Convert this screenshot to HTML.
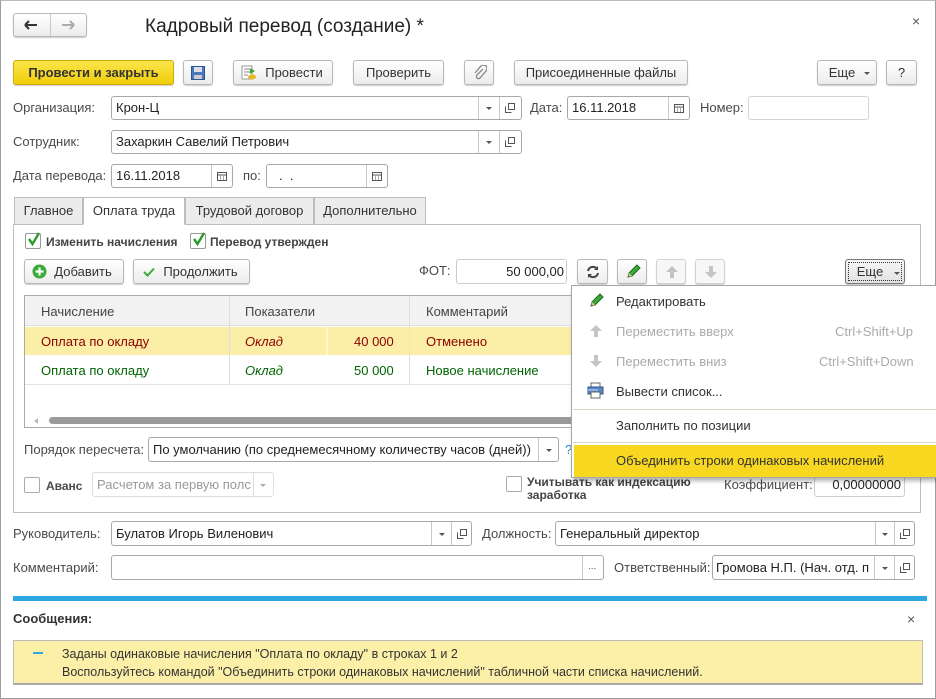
<!DOCTYPE html>
<html><head><meta charset="utf-8"><style>
*{margin:0;padding:0;box-sizing:border-box}
body{width:936px;height:699px;background:#fff;font-family:"Liberation Sans",Arial,sans-serif;font-size:13px;color:#333;position:relative;overflow:hidden}
.a{position:absolute;white-space:nowrap}
.btn{position:absolute;border:1px solid #b8b8b8;border-radius:3px;background:linear-gradient(#fff,#ececec);box-shadow:0 1px 1px rgba(0,0,0,.2);text-align:center;color:#333;line-height:23px}
.inp{position:absolute;border:1px solid #a8a8a8;border-radius:3px;background:#fff;line-height:22px;padding-left:4px;color:#222}
.sep{position:absolute;top:0;bottom:0;border-left:1px solid #c8c8c8}
.lbl{position:absolute;color:#4a4a4a;line-height:16px}
.cb{position:absolute;width:16px;height:16px;border:1px solid #999;border-radius:2px;background:#fff}
.dd{position:absolute;top:8px;width:0;height:0;border-left:3px solid transparent;border-right:3px solid transparent;border-top:3px solid #555}
.tab{position:absolute;top:197px;height:28px;border:1px solid #bdbdbd;background:#ececec;line-height:26px;text-align:center;color:#333}
</style></head><body>
<div class="a" style="left:0;top:0;width:936px;height:699px;border:1px solid #9c9c9c;border-top:1px solid #bbb"></div>

<div class="btn" style="left:13px;top:13px;width:74px;height:24px"><div class="sep" style="left:36px"></div>
<svg class="a" style="left:10px;top:6px" width="14" height="10"><path d="M1 5H13M1 5L5 1M1 5L5 9" stroke="#333" stroke-width="2" fill="none"/></svg>
<svg class="a" style="left:47px;top:6px" width="14" height="10"><path d="M1 5H13M13 5L9 1M13 5L9 9" stroke="#aaa" stroke-width="2" fill="none"/></svg></div>
<div class="a" style="left:145px;top:14px;font-size:19px;color:#222;line-height:26px">Кадровый перевод (создание) *</div>
<div class="a" style="left:912px;top:13px;color:#555;font-size:14px">×</div>

<div class="btn" style="left:13px;top:60px;width:161px;height:25px;background:linear-gradient(#fbe54a,#f0cd0a);border-color:#d2ae0c;font-weight:bold;color:#333">Провести и закрыть</div>
<div class="btn" style="left:183px;top:60px;width:30px;height:25px"><svg class="a" style="left:7px;top:5px" width="14" height="14"><rect x="0.5" y="0.5" width="13" height="13" fill="#4a78b8" stroke="#2c5592"/><rect x="3" y="1" width="8" height="5" fill="#dde"/><rect x="3" y="9" width="8" height="4" fill="#ccc"/></svg></div>
<div class="btn" style="left:233px;top:60px;width:100px;height:25px;padding-left:22px">Провести<svg class="a" style="left:7px;top:4px" width="16" height="16"><rect x="1" y="1" width="10" height="13" fill="#fff" stroke="#999"/><path d="M3 4h6M3 7h6M3 10h4" stroke="#888"/><path d="M9 3l5 3-5 3z" fill="#3aa63a"/><ellipse cx="11" cy="12" rx="4" ry="2.5" fill="#e9b824"/></svg></div>
<div class="btn" style="left:353px;top:60px;width:91px;height:25px">Проверить</div>
<div class="btn" style="left:464px;top:60px;width:30px;height:25px"><svg class="a" style="left:8px;top:4px" width="14" height="16"><path d="M10 4L4 10a2 2 0 0 0 3 3l6-7a3.5 3.5 0 0 0-5-5L2 8" stroke="#888" stroke-width="1.3" fill="none"/></svg></div>
<div class="btn" style="left:514px;top:60px;width:174px;height:25px">Присоединенные файлы</div>
<div class="btn" style="left:817px;top:60px;width:60px;height:25px;padding-right:10px">Еще<div class="dd" style="left:46px;top:11px"></div></div>
<div class="btn" style="left:886px;top:60px;width:31px;height:25px">?</div>

<div class="lbl" style="left:13px;top:100px">Организация:</div>
<div class="inp" style="left:111px;top:96px;width:411px;height:24px">Крон-Ц<div class="sep" style="left:366px"></div><div class="dd" style="left:374px;top:10px"></div><div class="sep" style="left:387px"></div><svg class="a" style="left:393px;top:6px" width="10" height="10"><rect x="3.5" y="0.5" width="6" height="6" fill="none" stroke="#555"/><path d="M0.5 3.5v6h6" fill="none" stroke="#555"/></svg></div>
<div class="lbl" style="left:530px;top:100px">Дата:</div>
<div class="inp" style="left:567px;top:96px;width:123px;height:24px">16.11.2018<div class="sep" style="left:100px"></div><svg class="a" style="left:106px;top:6px" width="10" height="10"><rect x="0.5" y="1.5" width="9" height="8" fill="none" stroke="#555"/><path d="M1 4h8M3 6h1M6 6h1M3 8h1M6 8h1" stroke="#555"/></svg></div>
<div class="lbl" style="left:700px;top:100px">Номер:</div>
<div class="inp" style="left:748px;top:96px;width:121px;height:24px;border-color:#d4d4d4"></div>

<div class="lbl" style="left:13px;top:134px">Сотрудник:</div>
<div class="inp" style="left:111px;top:130px;width:411px;height:24px">Захаркин Савелий Петрович<div class="sep" style="left:366px"></div><div class="dd" style="left:374px;top:10px"></div><div class="sep" style="left:387px"></div><svg class="a" style="left:393px;top:6px" width="10" height="10"><rect x="3.5" y="0.5" width="6" height="6" fill="none" stroke="#555"/><path d="M0.5 3.5v6h6" fill="none" stroke="#555"/></svg></div>

<div class="lbl" style="left:13px;top:168px">Дата перевода:</div>
<div class="inp" style="left:111px;top:164px;width:122px;height:24px">16.11.2018<div class="sep" style="left:99px"></div><svg class="a" style="left:105px;top:6px" width="10" height="10"><rect x="0.5" y="1.5" width="9" height="8" fill="none" stroke="#555"/><path d="M1 4h8M3 6h1M6 6h1M3 8h1M6 8h1" stroke="#555"/></svg></div>
<div class="lbl" style="left:243px;top:168px">по:</div>
<div class="inp" style="left:266px;top:164px;width:122px;height:24px;padding-left:12px">.&nbsp;&nbsp;.<div class="sep" style="left:99px"></div><svg class="a" style="left:105px;top:6px" width="10" height="10"><rect x="0.5" y="1.5" width="9" height="8" fill="none" stroke="#555"/><path d="M1 4h8M3 6h1M6 6h1M3 8h1M6 8h1" stroke="#555"/></svg></div>

<div class="a" style="left:13px;top:224px;width:908px;height:289px;border:1px solid #bdbdbd"></div>
<div class="tab" style="left:14px;width:69px">Главное</div>
<div class="tab" style="left:83px;width:102px;background:#fff;border-bottom-color:#fff;height:28px">Оплата труда</div>
<div class="tab" style="left:185px;width:129px">Трудовой договор</div>
<div class="tab" style="left:314px;width:112px">Дополнительно</div>

<div class="cb" style="left:25px;top:233px"></div><svg class="a" style="left:27px;top:231px" width="14" height="16"><path d="M2 8l3.5 5L12 2" stroke="#2d9a2d" stroke-width="2.4" fill="none"/></svg>
<div class="lbl" style="left:46px;top:234px;font-weight:bold;color:#444;font-size:12px">Изменить начисления</div>
<div class="cb" style="left:190px;top:233px"></div><svg class="a" style="left:192px;top:231px" width="14" height="16"><path d="M2 8l3.5 5L12 2" stroke="#2d9a2d" stroke-width="2.4" fill="none"/></svg>
<div class="lbl" style="left:210px;top:234px;font-weight:bold;color:#444;font-size:12px">Перевод утвержден</div>

<div class="btn" style="left:24px;top:259px;width:100px;height:25px;padding-left:18px">Добавить<svg class="a" style="left:7px;top:4px" width="15" height="15"><circle cx="7.5" cy="7.5" r="7" fill="#3aaa3a"/><path d="M7.5 3.5v8M3.5 7.5h8" stroke="#fff" stroke-width="2.2"/></svg></div>
<div class="btn" style="left:133px;top:259px;width:117px;height:25px;padding-left:18px">Продолжить<svg class="a" style="left:9px;top:7px" width="12" height="10"><path d="M1 5l3.5 3.5L11 1.5" stroke="#3aaa3a" stroke-width="2" fill="none"/></svg></div>
<div class="lbl" style="left:419px;top:263px">ФОТ:</div>
<div class="inp" style="left:456px;top:259px;width:111px;height:25px;text-align:right;padding-right:2px;border-color:#ccc;line-height:23px">50 000,00</div>
<div class="btn" style="left:577px;top:259px;width:31px;height:25px"><svg class="a" style="left:8px;top:5px" width="14" height="14"><path d="M2 6a5 5 0 0 1 9-2M12 8a5 5 0 0 1-9 2" stroke="#444" stroke-width="2" fill="none"/><path d="M12 1v4H8z M2 13V9h4z" fill="#444"/></svg></div>
<div class="btn" style="left:617px;top:259px;width:30px;height:25px"><svg class="a" style="left:7px;top:4px" width="16" height="16"><path d="M3 13l1-4 8-8 3 3-8 8z" fill="#3aaa3a" stroke="#1d6b1d"/><path d="M3 13l1-4 3 3z" fill="#e9c48a"/><path d="M3 13l.6-1.6 1 1z" fill="#333"/></svg></div>
<div class="btn" style="left:656px;top:259px;width:30px;height:25px;background:#f7f7f7;border-color:#d3d3d3"><svg class="a" style="left:8px;top:5px" width="14" height="14"><path d="M7 1l6 6H9v6H5V7H1z" fill="#c4c4c4"/></svg></div>
<div class="btn" style="left:695px;top:259px;width:30px;height:25px;background:#f7f7f7;border-color:#d3d3d3"><svg class="a" style="left:8px;top:5px" width="14" height="14"><path d="M7 13l6-6H9V1H5v6H1z" fill="#c4c4c4"/></svg></div>
<div class="btn" style="left:845px;top:259px;width:60px;height:25px;padding-right:10px;border-color:#777;background:linear-gradient(#f6f6f6,#e2e2e2)"><div class="a" style="left:2px;top:2px;right:2px;bottom:2px;border:1px dotted #333"></div>Еще<div class="dd" style="left:48px;top:12px"></div></div>

<div class="a" style="left:24px;top:295px;width:560px;height:133px;border:1px solid #aaa;background:#fff;overflow:hidden">
 <div class="a" style="left:0;top:0;width:560px;height:30px;background:#f2f2f2;border-bottom:1px solid #ddd"></div>
 <div class="a" style="left:204px;top:0;height:88px;border-left:1px solid #ddd"></div>
 <div class="a" style="left:384px;top:0;height:88px;border-left:1px solid #ddd"></div>
 <div class="a" style="left:16px;top:8px;color:#444">Начисление</div>
 <div class="a" style="left:220px;top:8px;color:#444">Показатели</div>
 <div class="a" style="left:401px;top:8px;color:#444">Комментарий</div>
 <div class="a" style="left:0;top:31px;width:560px;height:28px;background:#fbeea6"></div>
 <div class="a" style="left:301px;top:31px;height:28px;border-left:2px solid #fff6cf"></div>
 <div class="a" style="left:204px;top:31px;height:28px;border-left:1px solid #ddd"></div>
 <div class="a" style="left:384px;top:31px;height:28px;border-left:1px solid #f2e7b4"></div>
 <div class="a" style="left:16px;top:38px;color:#8b0000">Оплата по окладу</div>
 <div class="a" style="left:220px;top:38px;color:#8b0000;font-style:italic">Оклад</div>
 <div class="a" style="left:329px;top:38px;color:#8b0000">40 000</div>
 <div class="a" style="left:401px;top:38px;color:#8b0000">Отменено</div>
 <div class="a" style="left:0;top:88px;width:560px;border-top:1px solid #e2e2e2"></div>
 <div class="a" style="left:16px;top:67px;color:#006400">Оплата по окладу</div>
 <div class="a" style="left:220px;top:67px;color:#006400;font-style:italic">Оклад</div>
 <div class="a" style="left:329px;top:67px;color:#006400">50 000</div>
 <div class="a" style="left:401px;top:67px;color:#006400">Новое начисление</div>
 <div class="a" style="left:9px;top:122px;border-right:4px solid #bbb;border-top:3px solid transparent;border-bottom:3px solid transparent"></div>
 <div class="a" style="left:24px;top:121px;width:540px;height:7px;background:#9b9b9b;border-radius:4px"></div>
</div>

<div class="lbl" style="left:24px;top:442px">Порядок пересчета:</div>
<div class="inp" style="left:148px;top:437px;width:411px;height:25px;line-height:23px">По умолчанию (по среднемесячному количеству часов (дней))<div class="sep" style="left:389px"></div><div class="dd" style="left:397px;top:11px"></div></div>
<div class="lbl" style="left:565px;top:442px;color:#1f8fd0">?</div>

<div class="cb" style="left:24px;top:477px;border-color:#aaa"></div>
<div class="lbl" style="left:46px;top:478px;font-weight:bold;font-size:12px">Аванс</div>
<div class="inp" style="left:92px;top:472px;width:182px;height:25px;border-color:#ddd;color:#999;overflow:hidden;line-height:23px">Расчетом за первую полс<div class="a" style="left:160px;top:0;bottom:0;width:21px;background:#fff;border-left:1px solid #ddd"></div><div class="dd" style="left:167px;top:11px;border-top-color:#aaa"></div></div>

<div class="cb" style="left:506px;top:476px;border-color:#aaa"></div>
<div class="lbl" style="left:527px;top:476px;font-weight:bold;font-size:12px;line-height:13px;color:#444">Учитывать как индексацию<br>заработка</div>
<div class="lbl" style="left:724px;top:477px">Коэффициент:</div>
<div class="inp" style="left:814px;top:472px;width:91px;height:25px;text-align:right;padding-right:3px;border-color:#ccc;line-height:23px">0,00000000</div>

<div class="a" style="left:571px;top:285px;width:370px;height:193px;background:#fff;border:1px solid #a6a6a6;box-shadow:2px 3px 4px rgba(0,0,0,.3)">
 <svg class="a" style="left:16px;top:7px" width="16" height="16"><path d="M3 13l1-4 8-8 3 3-8 8z" fill="#3aaa3a" stroke="#1d6b1d"/><path d="M3 13l1-4 3 3z" fill="#e9c48a"/><path d="M3 13l.6-1.6 1 1z" fill="#333"/></svg>
 <div class="a" style="left:44px;top:8px;color:#333">Редактировать</div>
 <svg class="a" style="left:17px;top:38px" width="14" height="14"><path d="M7 1l6 6H9v6H5V7H1z" fill="#c4c4c4"/></svg>
 <div class="a" style="left:44px;top:38px;color:#aaa">Переместить вверх</div>
 <div class="a" style="left:263px;top:38px;color:#aaa">Ctrl+Shift+Up</div>
 <svg class="a" style="left:17px;top:68px" width="14" height="14"><path d="M7 13l6-6H9V1H5v6H1z" fill="#c4c4c4"/></svg>
 <div class="a" style="left:44px;top:68px;color:#aaa">Переместить вниз</div>
 <div class="a" style="left:247px;top:68px;color:#aaa">Ctrl+Shift+Down</div>
 <svg class="a" style="left:15px;top:96px" width="17" height="17"><rect x="4" y="1" width="9" height="5" fill="#fff" stroke="#666"/><rect x="1" y="5" width="15" height="7" fill="#5b87c4" stroke="#2c5592"/><rect x="4" y="10" width="9" height="6" fill="#fff" stroke="#666"/><path d="M1 8h10" stroke="#cde"/></svg>
 <div class="a" style="left:44px;top:98px;color:#333">Вывести список...</div>
 <div class="a" style="left:1px;top:123px;width:368px;border-top:1px solid #ddd5c0"></div>
 <div class="a" style="left:44px;top:132px;color:#333">Заполнить по позиции</div>
 <div class="a" style="left:1px;top:156px;width:368px;border-top:1px solid #ddd5c0"></div>
 <div class="a" style="left:2px;top:159px;width:366px;height:32px;background:#f8d720"></div>
 <div class="a" style="left:44px;top:167px;color:#333">Объединить строки одинаковых начислений</div>
</div>

<div class="lbl" style="left:13px;top:526px">Руководитель:</div>
<div class="inp" style="left:111px;top:521px;width:361px;height:25px;line-height:23px">Булатов Игорь Виленович<div class="sep" style="left:319px"></div><div class="dd" style="left:327px;top:11px"></div><div class="sep" style="left:339px"></div><svg class="a" style="left:345px;top:7px" width="10" height="10"><rect x="3.5" y="0.5" width="6" height="6" fill="none" stroke="#555"/><path d="M0.5 3.5v6h6" fill="none" stroke="#555"/></svg></div>
<div class="lbl" style="left:482px;top:526px">Должность:</div>
<div class="inp" style="left:555px;top:521px;width:360px;height:25px;line-height:23px">Генеральный директор<div class="sep" style="left:319px"></div><div class="dd" style="left:326px;top:11px"></div><div class="sep" style="left:338px"></div><svg class="a" style="left:344px;top:7px" width="10" height="10"><rect x="3.5" y="0.5" width="6" height="6" fill="none" stroke="#555"/><path d="M0.5 3.5v6h6" fill="none" stroke="#555"/></svg></div>
<div class="lbl" style="left:13px;top:560px">Комментарий:</div>
<div class="inp" style="left:111px;top:555px;width:493px;height:25px"><div class="sep" style="left:470px"></div><div class="a" style="left:476px;top:0;font-size:10px;color:#555">...</div></div>
<div class="lbl" style="left:614px;top:560px">Ответственный:</div>
<div class="inp" style="left:712px;top:555px;width:203px;height:25px;overflow:hidden;padding-left:3px;line-height:23px">Громова Н.П. (Нач. отд. п<div class="a" style="left:161px;top:0;bottom:0;width:41px;background:#fff;border-left:1px solid #c8c8c8"></div><div class="dd" style="left:169px;top:11px"></div><div class="sep" style="left:181px"></div><svg class="a" style="left:187px;top:7px" width="10" height="10"><rect x="3.5" y="0.5" width="6" height="6" fill="none" stroke="#555"/><path d="M0.5 3.5v6h6" fill="none" stroke="#555"/></svg></div>

<div class="a" style="left:13px;top:596px;width:914px;height:5px;background:#2ea6df"></div>
<div class="a" style="left:13px;top:611px;font-weight:bold;color:#333">Сообщения:</div>
<div class="a" style="left:907px;top:611px;color:#555;font-size:14px">×</div>
<div class="a" style="left:13px;top:640px;width:910px;height:45px;background:#fcf0a8;border:1px solid #bbb;border-bottom:2px solid #aaa"></div>
<div class="a" style="left:33px;top:652px;width:10px;height:2px;background:#2ea6df"></div>
<div class="a" style="left:62px;top:645px;color:#333;line-height:18px;font-size:12.5px">Заданы одинаковые начисления "Оплата по окладу" в строках 1 и 2<br>Воспользуйтесь командой "Объединить строки одинаковых начислений" табличной части списка начислений.</div>
</body></html>
